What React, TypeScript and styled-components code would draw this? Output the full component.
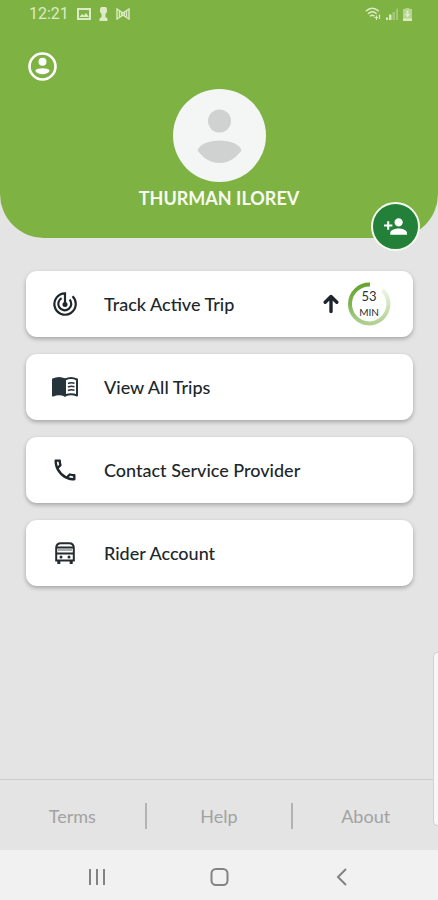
import React from 'react';
import styled, { createGlobalStyle } from 'styled-components';
import { MdOutlineCall, MdPersonAdd } from 'react-icons/md';

const GlobalStyle = createGlobalStyle`
  * { box-sizing: border-box; }
  body { margin: 0; background: #e4e4e4; font-family: Lato, "Open Sans", sans-serif; }
  button { font: inherit; border: 0; padding: 0; background: none; cursor: pointer; }
  svg { display: block; flex: none; }
`;

const Screen = styled.div`
  position: relative;
  display: flex;
  flex-direction: column;
  min-height: 100vh;
  background: #e4e4e4;
`;

const Header = styled.header`
  position: relative;
  display: flex;
  flex-direction: column;
  padding-bottom: 29px;
  background: #7eb343;
  border-radius: 0 0 44px 44px;
`;

const StatusBar = styled.div`
  display: flex;
  justify-content: space-between;
  align-items: center;
  height: 28px;
  padding: 0 26px 0 29px;
  color: #dcebc5;
  font: 16px/28px Roboto, sans-serif;
`;

const StatusGroup = styled.div<{ $gap: number }>`
  display: flex;
  align-items: center;
  gap: ${(p) => p.$gap}px;
`;

const ProfileButton = styled.button`
  align-self: flex-start;
  margin: 24px 0 0 28px;
  color: #fff;
`;

const Identity = styled.div`
  display: flex;
  flex-direction: column;
  align-items: center;
  gap: 5px;
  margin-top: 8px;
`;

const Avatar = styled.div`
  width: 93px;
  height: 93px;
  border-radius: 50%;
  background: #f4f6f6;
  overflow: hidden;
`;

const UserName = styled.h1`
  margin: 0;
  color: #f8fbf2;
  font-size: 18px;
  font-weight: 700;
  line-height: 22px;
`;

const AddRider = styled.button`
  position: absolute;
  right: 18px;
  bottom: -13px;
  display: grid;
  place-items: center;
  width: 49px;
  height: 49px;
  border: 2px solid #f4faf0;
  border-radius: 50%;
  background: #228039;
  color: #fff;
`;

const Menu = styled.main`
  display: flex;
  flex: 1;
  flex-direction: column;
  gap: 17px;
  padding: 33px 25px 33px 26px;
`;

const Card = styled.button`
  display: flex;
  align-items: center;
  width: 100%;
  height: 66px;
  padding: 0 22px 0 24px;
  border-radius: 11px;
  background: #fff;
  color: #20272b;
  box-shadow: 0 2px 4px rgba(0, 0, 0, 0.28);
  text-align: left;
`;

const IconSlot = styled.span`
  display: grid;
  place-items: center;
  width: 30px;
  margin-right: 24px;
`;

const CardLabel = styled.span`
  flex: 1;
  font-size: 18px;
  font-weight: 500;
  line-height: 24px;
`;

const Countdown = styled.span`
  display: flex;
  align-items: center;
  gap: 8px;
`;

const Ring = styled.span`
  display: grid;
  place-items: center;
  width: 44px;
  height: 44px;
  > * { grid-area: 1 / 1; }
`;

const RingText = styled.span`
  display: flex;
  flex-direction: column;
  align-items: center;
  color: #2b3135;
  font-size: 10px;
  line-height: 16px;
`;

const Minutes = styled.span`
  font-size: 13px;
`;

const Footer = styled.footer`
  display: flex;
  align-items: center;
  height: 71px;
  padding-top: 2px;
  border-top: 1px solid #cdcdcd;
`;

const FooterLink = styled.a`
  flex: 1;
  color: #a2a2a2;
  font-size: 18px;
  line-height: 24px;
  text-align: center;
  text-decoration: none;
`;

const Divider = styled.span`
  width: 2px;
  height: 26px;
  background: #b3b3b3;
`;

const NavBar = styled.nav`
  display: flex;
  align-items: center;
  justify-content: center;
  gap: 104px;
  height: 50px;
  padding-top: 3px;
  background: #f1f1f1;
`;

const NavButton = styled.button`
  color: #838383;
`;

const EdgeHandle = styled.div`
  position: absolute;
  right: 0;
  bottom: 74px;
  width: 5px;
  height: 174px;
  border: 1px solid #d2d2d2;
  border-right: 0;
  border-radius: 5px 0 0 5px;
  background: #f7f7f7;
`;

const PictureIcon = () => (
  <svg width="14" height="12" viewBox="0 0 14 12" fill="none" stroke="currentColor" strokeWidth="2">
    <rect x="1" y="1" width="12" height="10" />
    <path d="M2.5 9l2.5-3 2 1.500L9 5l3 4z" fill="currentColor" stroke="none" />
  </svg>
);

const KeyholeIcon = () => (
  <svg width="9" height="14" viewBox="0 0 9 14" fill="currentColor">
    <path d="M2 0h5l1 2v3L6.500 7v3l2 1.500V14h-8v-2.500L2.500 10V7L1 5V2z" />
  </svg>
);

const MailIcon = () => (
  <svg width="14" height="12" viewBox="0 0 14 12" fill="none" stroke="currentColor" strokeWidth="1.400">
    <path d="M1 11V1l6 4 6-4v10l-6-4zM3.500 2.500v7M10.500 2.500v7" />
    <circle cx="7" cy="6" r="1.500" />
  </svg>
);

const WifiIcon = () => (
  <svg width="16" height="14" viewBox="0 0 16 14" fill="none" stroke="currentColor" strokeWidth="1.500">
    <path d="M.8 4.200q6.400-6 13 0M3 6.800q4.300-4 8.600 0M5 9.300q2.300-2 4.500 0" />
    <path d="M9.500 10.500h3.500M11.500 8.500v4.500M14.500 12V7.500" strokeWidth="1.200" />
  </svg>
);

const SignalIcon = () => (
  <svg width="12" height="12" viewBox="0 0 12 12" fill="currentColor">
    <path d="M0 12h2V9.500H0zM3 12h2.500V6.500H3z" />
    <path d="M6.500 12H9V4H6.500zM10 12h2V0l-2 1.500z" opacity=".4" />
  </svg>
);

const BatteryIcon = () => (
  <svg width="9" height="13" viewBox="0 0 9 13" fill="currentColor">
    <path d="M2.500 0h4v1H9v12H0V1h2.500z" opacity=".6" />
    <path d="M3.500 2.500h2V6h2l-3 3.500-3-3.500h2zM0 10.500h9V13H0z" />
  </svg>
);

const ProfileIcon = () => (
  <svg width="29" height="29" viewBox="0 0 29 29" fill="currentColor">
    <circle cx="14.500" cy="14.500" r="13" fill="none" stroke="currentColor" strokeWidth="2.600" />
    <circle cx="14.500" cy="9.800" r="4" />
    <path d="M7.300 18.500C9 15.500 20 15.500 21.700 18.500 20 23.500 9 23.500 7.300 18.500z" />
  </svg>
);

const AvatarFigure = () => (
  <svg width="93" height="93" viewBox="0 0 93 93" fill="#d0d1d1">
    <circle cx="46.500" cy="32" r="11.500" />
    <path d="M24.500 61.500C28 48 65 48 68.500 61.500 65 66 58 74 46.500 74S28 66 24.500 61.500z" />
  </svg>
);

const TrackIcon = () => (
  <svg width="26" height="26" viewBox="0 0 26 26" fill="none" stroke="currentColor" strokeWidth="2.200">
    <path d="M20.500 5.300A10.700 10.700 0 1 1 13 2.300V13.500" />
    <path d="M9.600 7.100A6.500 6.500 0 1 0 17.600 8.400" />
    <circle cx="13" cy="13.500" r="2.500" fill="currentColor" stroke="none" />
  </svg>
);

const BookIcon = () => (
  <svg width="28" height="22" viewBox="0 0 28 22" fill="none" stroke="#26343b" strokeWidth="2" strokeLinejoin="round">
    <path d="M2 3.500Q8 .5 14 3.500v16Q8 17 2 19.500z" fill="#26343b" />
    <path d="M14 3.500Q20 .5 26 3.500v16Q20 17 14 19.500z" />
    <path d="M17 7.500Q20 6.200 23.500 7.200M17 11Q20 9.700 23.500 10.700M17 14.500Q20 13.200 23.500 14.200" strokeWidth="1.600" />
  </svg>
);

const BusIcon = () => (
  <svg width="20" height="23" viewBox="0 0 20 23" fill="none" stroke="#252b2e" strokeWidth="2">
    <path d="M1.200 18.500V6Q1.200 1.200 6 1.200h8q4.800 0 4.800 4.800v12.500z" />
    <path d="M2 5.500h16M2 11.500h16" strokeWidth="1.800" />
    <path d="M3 8h14" stroke="#a7acad" strokeWidth="2" />
    <path d="M3.800 18.500V22M16.200 18.500V22" strokeWidth="3" />
    <circle cx="6" cy="15" r="1.500" fill="#252b2e" stroke="none" />
    <circle cx="14" cy="15" r="1.500" fill="#252b2e" stroke="none" />
  </svg>
);

const ArrowUpIcon = () => (
  <svg width="16" height="20" viewBox="0 0 16 20" fill="none" stroke="#1d252d" strokeWidth="3.400" strokeLinecap="round" strokeLinejoin="round">
    <path d="M8 17.500V2.500M2.200 8.200L8 2.500 13.800 8.200" />
  </svg>
);

const RingIcon = () => (
  <svg width="44" height="44" viewBox="0 0 44 44" fill="none" strokeWidth="4">
    <defs>
      <linearGradient id="ringLeft" x1="0" y1="0" x2="0" y2="1">
        <stop offset="0" stopColor="#67a431" />
        <stop offset=".5" stopColor="#80b453" />
        <stop offset="1" stopColor="#b0d08f" />
      </linearGradient>
      <linearGradient id="ringRight" x1="0" y1="1" x2="0" y2="0">
        <stop offset="0" stopColor="#b0d08f" />
        <stop offset="1" stopColor="#edf4e6" />
      </linearGradient>
    </defs>
    <path d="M23 2.500A19.500 19.500 0 0 0 22 41.500" stroke="url(#ringLeft)" />
    <path d="M22 41.500A19.500 19.500 0 0 0 35.500 8" stroke="url(#ringRight)" />
  </svg>
);

const RecentsIcon = () => (
  <svg width="18" height="18" viewBox="0 0 18 18" stroke="currentColor" strokeWidth="2">
    <path d="M2 1v16M9 1v16M16 1v16" />
  </svg>
);

const HomeIcon = () => (
  <svg width="19" height="18" viewBox="0 0 19 18" fill="none" stroke="currentColor" strokeWidth="2">
    <rect x="1.500" y="1" width="16" height="16" rx="4.500" />
  </svg>
);

const BackIcon = () => (
  <svg width="18" height="18" viewBox="0 0 18 18" fill="none" stroke="currentColor" strokeWidth="2">
    <path d="M13 1L5 9l8 8" />
  </svg>
);

const menuItems = [
  { label: 'Track Active Trip', icon: <TrackIcon />, minutes: 53 },
  { label: 'View All Trips', icon: <BookIcon /> },
  { label: 'Contact Service Provider', icon: <MdOutlineCall size={28} /> },
  { label: 'Rider Account', icon: <BusIcon /> },
];

export default function App() {
  return (
    <Screen>
      <GlobalStyle />
      <Header>
        <StatusBar>
          <StatusGroup $gap={8}>
            <span>12:21</span>
            <PictureIcon />
            <KeyholeIcon />
            <MailIcon />
          </StatusGroup>
          <StatusGroup $gap={5}>
            <WifiIcon />
            <SignalIcon />
            <BatteryIcon />
          </StatusGroup>
        </StatusBar>
        <ProfileButton aria-label="Profile"><ProfileIcon /></ProfileButton>
        <Identity>
          <Avatar><AvatarFigure /></Avatar>
          <UserName>THURMAN ILOREV</UserName>
        </Identity>
        <AddRider aria-label="Add rider"><MdPersonAdd size={25} /></AddRider>
      </Header>
      <Menu>
        {menuItems.map((item) => (
          <Card key={item.label}>
            <IconSlot>{item.icon}</IconSlot>
            <CardLabel>{item.label}</CardLabel>
            {item.minutes && (
              <Countdown>
                <ArrowUpIcon />
                <Ring>
                  <RingIcon />
                  <RingText>
                    <Minutes>{item.minutes}</Minutes>
                    <span>MIN</span>
                  </RingText>
                </Ring>
              </Countdown>
            )}
          </Card>
        ))}
      </Menu>
      <Footer>
        <FooterLink href="#terms">Terms</FooterLink>
        <Divider />
        <FooterLink href="#help">Help</FooterLink>
        <Divider />
        <FooterLink href="#about">About</FooterLink>
      </Footer>
      <NavBar>
        <NavButton aria-label="Recent apps"><RecentsIcon /></NavButton>
        <NavButton aria-label="Home"><HomeIcon /></NavButton>
        <NavButton aria-label="Back"><BackIcon /></NavButton>
      </NavBar>
      <EdgeHandle />
    </Screen>
  );
}
